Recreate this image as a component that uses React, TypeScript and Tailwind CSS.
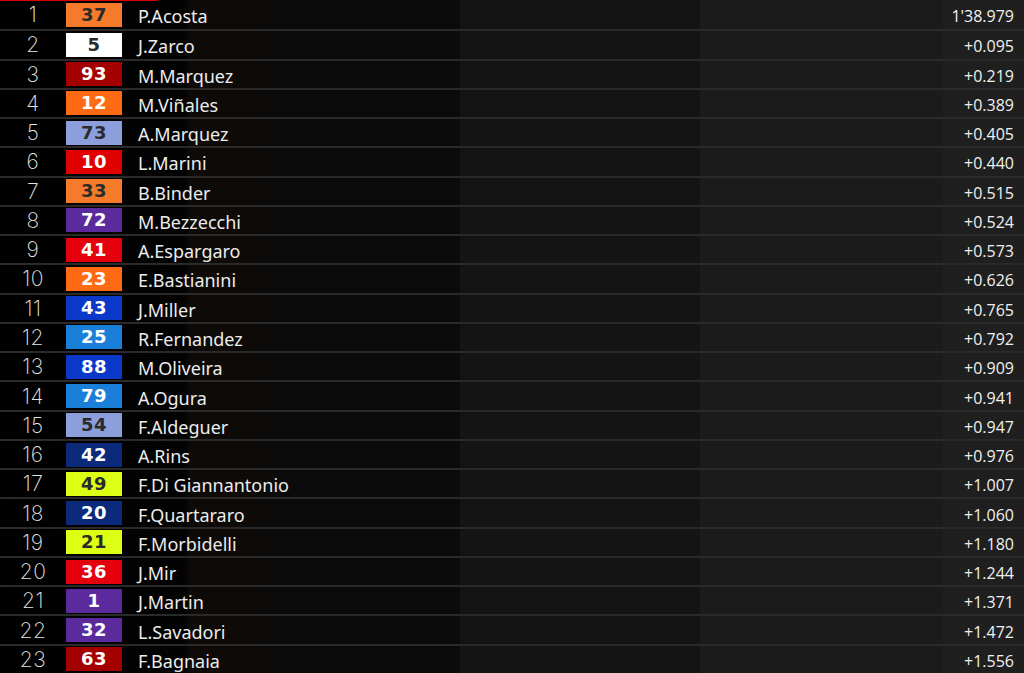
const rows: { pos: number; num: string; bg: string; dark: boolean; name: string; time: string }[] = [
  { pos: 1, num: '37', bg: 'bg-[#f57a2a]', dark: true, name: 'P.Acosta', time: "1'38.979" },
  { pos: 2, num: '5', bg: 'bg-[#ffffff]', dark: true, name: 'J.Zarco', time: '+0.095' },
  { pos: 3, num: '93', bg: 'bg-[#a50000]', dark: false, name: 'M.Marquez', time: '+0.219' },
  { pos: 4, num: '12', bg: 'bg-[#ff6a14]', dark: false, name: 'M.Viñales', time: '+0.389' },
  { pos: 5, num: '73', bg: 'bg-[#8c9edc]', dark: true, name: 'A.Marquez', time: '+0.405' },
  { pos: 6, num: '10', bg: 'bg-[#e00000]', dark: false, name: 'L.Marini', time: '+0.440' },
  { pos: 7, num: '33', bg: 'bg-[#f57a2a]', dark: true, name: 'B.Binder', time: '+0.515' },
  { pos: 8, num: '72', bg: 'bg-[#5b2a9c]', dark: false, name: 'M.Bezzecchi', time: '+0.524' },
  { pos: 9, num: '41', bg: 'bg-[#e4000c]', dark: false, name: 'A.Espargaro', time: '+0.573' },
  { pos: 10, num: '23', bg: 'bg-[#ff6a14]', dark: false, name: 'E.Bastianini', time: '+0.626' },
  { pos: 11, num: '43', bg: 'bg-[#0a38c8]', dark: false, name: 'J.Miller', time: '+0.765' },
  { pos: 12, num: '25', bg: 'bg-[#1a7fd8]', dark: false, name: 'R.Fernandez', time: '+0.792' },
  { pos: 13, num: '88', bg: 'bg-[#0a38c8]', dark: false, name: 'M.Oliveira', time: '+0.909' },
  { pos: 14, num: '79', bg: 'bg-[#1a7fd8]', dark: false, name: 'A.Ogura', time: '+0.941' },
  { pos: 15, num: '54', bg: 'bg-[#8c9edc]', dark: true, name: 'F.Aldeguer', time: '+0.947' },
  { pos: 16, num: '42', bg: 'bg-[#0c2a7c]', dark: false, name: 'A.Rins', time: '+0.976' },
  { pos: 17, num: '49', bg: 'bg-[#dcff14]', dark: true, name: 'F.Di Giannantonio', time: '+1.007' },
  { pos: 18, num: '20', bg: 'bg-[#0c2a7c]', dark: false, name: 'F.Quartararo', time: '+1.060' },
  { pos: 19, num: '21', bg: 'bg-[#dcff14]', dark: true, name: 'F.Morbidelli', time: '+1.180' },
  { pos: 20, num: '36', bg: 'bg-[#e4000c]', dark: false, name: 'J.Mir', time: '+1.244' },
  { pos: 21, num: '1', bg: 'bg-[#5b2a9c]', dark: false, name: 'J.Martin', time: '+1.371' },
  { pos: 22, num: '32', bg: 'bg-[#5b2a9c]', dark: false, name: 'L.Savadori', time: '+1.472' },
  { pos: 23, num: '63', bg: 'bg-[#a50000]', dark: false, name: 'F.Bagnaia', time: '+1.556' },
];

function Row({ r, first }: { r: (typeof rows)[number]; first: boolean }) {
  return (
    <div
      className={`relative flex min-h-0 items-stretch leading-none ${first ? '' : 'border-t-2 border-[#2a2a2a]'}`}
    >
      {first ? <div className="absolute left-0 top-0 z-20 h-px w-[157px] bg-[#e00000]" /> : null}
      <div className="relative z-10 flex w-[264px] shrink-0 items-center bg-[linear-gradient(90deg,#000_0%,#030303_70%,#0d0a08_72%,#0d0a08_100%)]">
        <div className="w-[66px] shrink-0 text-center text-[21px] font-extralight tracking-wide text-[#e6e6e6] [font-family:Inter,'Liberation_Sans',sans-serif]">
          {r.pos}
        </div>
        <div
          className={`flex h-[24px] w-[56px] shrink-0 items-center justify-center ${r.bg} text-[18px] font-black tracking-wide [font-family:'DejaVu_Sans',sans-serif] ${
            r.dark ? 'text-[#2a2a2a]' : 'text-white'
          }`}
        >
          {r.num}
        </div>
        <div className="ml-[16px] whitespace-nowrap pt-[3px] text-[18px] text-[#ececec] [font-family:'Noto_Sans',sans-serif]">
          {r.name}
        </div>
      </div>
      <div className="w-[196px] shrink-0 bg-[#0b0b0b]" />
      <div className="w-[240px] shrink-0 bg-[#141414]" />
      <div className="w-[243px] shrink-0 bg-[#1b1b1b]" />
      <div className="flex flex-1 items-center justify-end bg-[#1f1f1f] pr-[10px] pt-[3px] text-[16px] font-medium text-[#f0f0f0] [font-family:'Open_Sans',sans-serif]">
        {r.time}
      </div>
    </div>
  );
}

export default function App() {
  return (
    <div className="grid h-[673px] w-[1024px] grid-rows-[repeat(23,minmax(0,1fr))] overflow-hidden bg-black">
      {rows.map((r, i) => (
        <Row key={r.pos} r={r} first={i === 0} />
      ))}
    </div>
  );
}
